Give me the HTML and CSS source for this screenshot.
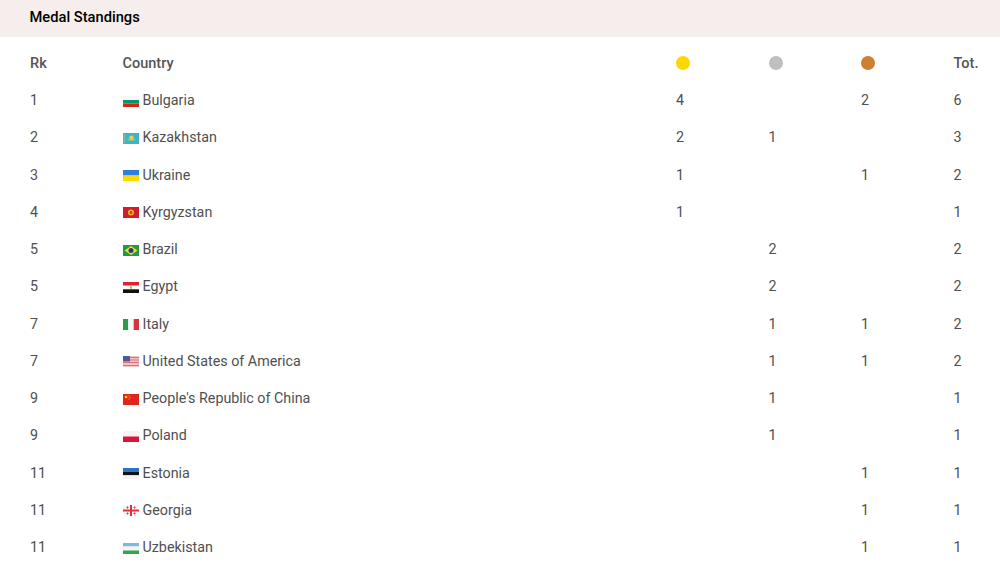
FILE: index.html
```html
<!DOCTYPE html>
<html lang="en">
<head>
<meta charset="utf-8">
<title>Medal Standings</title>
<link rel="stylesheet" href="styles.css">
</head>
<body>
<section class="standings">
  <h2 class="title"><span class="title-text">Medal Standings</span></h2>
  <div class="row head">
    <span>Rk</span><span>Country</span>
    <span><i class="medal gold"></i></span><span><i class="medal silver"></i></span><span><i class="medal bronze"></i></span>
    <span>Tot.</span>
  </div>
  <div class="row"><span>1</span><span class="country"><svg class="flag" viewBox="0 0 16 11"><rect width="16" height="4" fill="#f6f6f6"/><rect y="4" width="16" height="3.500" fill="#00966e"/><rect y="7.500" width="16" height="3.500" fill="#d62612"/></svg>Bulgaria</span><span>4</span><span></span><span>2</span><span>6</span></div>
  <div class="row"><span>2</span><span class="country"><svg class="flag" viewBox="0 0 16 11"><rect width="16" height="11" fill="#3fb4c8"/><circle cx="8.500" cy="4.600" r="2.200" fill="#e8d24a"/><path d="M4 6.200h9L11 7.400H6z" fill="#d8c84a"/><rect x="1" y="1" width="1" height="9" fill="#8cc0a0"/></svg>Kazakhstan</span><span>2</span><span>1</span><span></span><span>3</span></div>
  <div class="row"><span>3</span><span class="country"><svg class="flag" viewBox="0 0 16 11"><rect width="16" height="5.500" fill="#2f7fe0"/><rect y="5.500" width="16" height="5.500" fill="#ffd800"/></svg>Ukraine</span><span>1</span><span></span><span>1</span><span>2</span></div>
  <div class="row"><span>4</span><span class="country"><svg class="flag" viewBox="0 0 16 11"><rect width="16" height="11" fill="#d01c2c"/><circle cx="8" cy="5.500" r="3" fill="#f5b81c"/><circle cx="8" cy="5.500" r="1.500" fill="#d0401c"/></svg>Kyrgyzstan</span><span>1</span><span></span><span></span><span>1</span></div>
  <div class="row"><span>5</span><span class="country"><svg class="flag" viewBox="0 0 16 11"><rect width="16" height="11" fill="#1f9a45"/><path d="M8 1l6.500 4.500L8 10 1.500 5.500z" fill="#f5dc1e"/><circle cx="8" cy="5.500" r="2.500" fill="#1d3f8f"/></svg>Brazil</span><span></span><span>2</span><span></span><span>2</span></div>
  <div class="row"><span>5</span><span class="country"><svg class="flag" viewBox="0 0 16 11"><rect width="16" height="3.700" fill="#e0212e"/><rect y="3.700" width="16" height="3.600" fill="#fff"/><rect y="7.300" width="16" height="3.700" fill="#111"/><rect x="7" y="4.300" width="2" height="2.400" fill="#c9a53a"/></svg>Egypt</span><span></span><span>2</span><span></span><span>2</span></div>
  <div class="row"><span>7</span><span class="country"><svg class="flag" viewBox="0 0 16 11"><rect width="5.300" height="11" fill="#2d9a4e"/><rect x="5.300" width="5.400" height="11" fill="#f6f6f6"/><rect x="10.700" width="5.300" height="11" fill="#d8323c"/></svg>Italy</span><span></span><span>1</span><span>1</span><span>2</span></div>
  <div class="row"><span>7</span><span class="country"><svg class="flag" viewBox="0 0 16 11"><rect width="16" height="11" fill="#f0c4c4"/><path d="M0 1.500h16M0 4h16M0 6.500h16M0 9.500h16" stroke="#d9727a" stroke-width="1"/><rect width="7" height="5.500" fill="#4f5a96"/></svg>United States of America</span><span></span><span>1</span><span>1</span><span>2</span></div>
  <div class="row"><span>9</span><span class="country"><svg class="flag" viewBox="0 0 16 11"><rect width="16" height="11" fill="#e0261c"/><circle cx="3" cy="3" r="1.300" fill="#ffde00"/><circle cx="6" cy="1.700" r=".5" fill="#ffde00"/><circle cx="7" cy="3.200" r=".5" fill="#ffde00"/><circle cx="6" cy="5" r=".5" fill="#ffde00"/></svg>People's Republic of China</span><span></span><span>1</span><span></span><span>1</span></div>
  <div class="row"><span>9</span><span class="country"><svg class="flag" viewBox="0 0 16 11"><rect width="16" height="5.500" fill="#f4f4f4"/><rect y="5.500" width="16" height="5.500" fill="#dc143c"/></svg>Poland</span><span></span><span>1</span><span></span><span>1</span></div>
  <div class="row"><span>11</span><span class="country"><svg class="flag" viewBox="0 0 16 11"><rect width="16" height="3.700" fill="#2a74c4"/><rect y="3.700" width="16" height="3.600" fill="#111"/><rect y="7.300" width="16" height="3.700" fill="#f4f4f4"/></svg>Estonia</span><span></span><span></span><span>1</span><span>1</span></div>
  <div class="row"><span>11</span><span class="country"><svg class="flag" viewBox="0 0 16 11"><rect width="16" height="11" fill="#f6f6f6"/><path d="M8 0v11M0 5.500h16" stroke="#e0303c" stroke-width="2"/><path d="M3.500 2.500h2M4.500 1.500v2M10.500 2.500h2M11.500 1.500v2M3.500 8.500h2M4.500 7.500v2M10.500 8.500h2M11.500 7.500v2" stroke="#e0303c"/></svg>Georgia</span><span></span><span></span><span>1</span><span>1</span></div>
  <div class="row"><span>11</span><span class="country"><svg class="flag" viewBox="0 0 16 11"><rect width="16" height="3.500" fill="#7fb8dc"/><rect y="3.500" width="16" height="4" fill="#f4f4f4"/><rect y="7.500" width="16" height="3.500" fill="#2fa84a"/></svg>Uzbekistan</span><span></span><span></span><span>1</span><span>1</span></div>
</section>
</body>
</html>
```
FILE: styles.css
```css
html, body {
  margin: 0;
  padding: 0;
  background: #fff;
}
body {
  font-family: Roboto, "Liberation Sans", sans-serif;
  font-size: 14.300px;
  color: #505050;
  overflow: hidden;
}
.title {
  margin: 0 0 7.400px;
  height: 34.500px;
  padding: 0 0 2px 29.500px;
  display: flex;
  align-items: center;
  background: #f5eeec;
  color: #000;
  font-size: 14.700px;
  font-weight: 500;
}
.row {
  display: grid;
  grid-template-columns: 92.500px 553.500px 92.500px 92.500px 92.500px 1fr;
  align-items: center;
  height: 37.250px;
  padding-left: 30px;
}
.head {
  box-sizing: border-box;
  padding-top: 1px;
  font-size: 14.500px;
  font-weight: 500;
  color: #555;
  height: 37.600px;
}
.country {
  display: flex;
  align-items: center;
  gap: 4px;
}
.flag {
  width: 16px;
  height: 11px;
  flex: none;
  margin-top: 2px;
}
.medal {
  display: block;
  width: 14px;
  height: 14px;
  border-radius: 50%;
  margin-top: -1px;
}
.gold { background: #ffd700; }
.silver { background: #c0c0c0; }
.bronze { background: #cd7f32; }
```
